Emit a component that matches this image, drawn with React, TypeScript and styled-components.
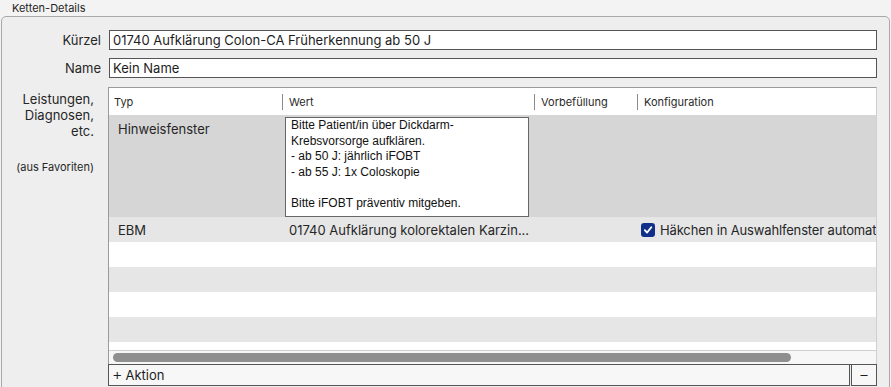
import React from 'react';
import styled, { createGlobalStyle } from 'styled-components';

const GlobalStyle = createGlobalStyle`
  html, body {
    margin: 0;
    padding: 0;
    background: #f3f3f3;
    overflow: hidden;
  }
  body {
    font-family: Inter, "Liberation Sans", sans-serif;
    color: #1d1d1d;
  }
`;

const Page = styled.div`
  width: 891px;
  height: 387px;
  overflow: hidden;
  background: #f3f3f3;
`;

const GroupTitle = styled.div`
  height: 16px;
  padding-left: 12px;
  font-size: 11px;
  line-height: 17px;
  color: #262626;
`;

const GroupBox = styled.div`
  margin-left: 1px;
  width: 889px;
  height: 400px;
  border: 1px solid #a9a9a9;
  border-radius: 5px 5px 0 0;
  background: #eeeeee;
  padding: 13px 12px 0 0;
  box-sizing: border-box;
  display: grid;
  grid-template-columns: 99px minmax(0, 1fr);
  grid-template-rows: 20px 20px auto;
  column-gap: 8px;
  row-gap: 8px;
`;

const Label = styled.div<{ $multi?: boolean }>`
  font-size: 13px;
  text-align: right;
  color: #262626;
  line-height: ${({ $multi }) => ($multi ? '16px' : '20px')};
  padding-right: ${({ $multi }) => ($multi ? '7px' : '0')};
  padding-top: ${({ $multi }) => ($multi ? '5px' : '0')};
`;

const Hint = styled.div`
  font-size: 11px;
  margin-top: 20px;
`;

const TextField = styled.div`
  height: 20px;
  box-sizing: border-box;
  border: 1px solid #555555;
  background: #ffffff;
  font-size: 13px;
  line-height: 18px;
  padding-left: 3px;
  white-space: nowrap;
  overflow: hidden;
`;

const TableWrap = styled.div`
  min-width: 0;
  margin-top: 1px;
  margin-left: -1px;
  border: 1px solid #9a9a9a;
  border-bottom: none;
  border-right-color: #cfcfcf;
  background: #ffffff;
  display: flex;
  flex-direction: column;
  height: 298px;
`;

const Viewport = styled.div`
  flex: 1;
  overflow: hidden;
`;

const Content = styled.div`
  width: 1100px;
`;

const HeaderRow = styled.div`
  display: grid;
  grid-template-columns: 173px 252px 103px 1fr;
  height: 27px;
  background: #ffffff;
  align-items: center;
`;

const HeaderCell = styled.div<{ $sep?: boolean }>`
  font-size: 11px;
  color: #2a2a2a;
  height: 16px;
  line-height: 16px;
  padding-left: ${({ $sep }) => ($sep ? '6px' : '5px')};
  border-left: ${({ $sep }) => ($sep ? '1px solid #8a8a8a' : 'none')};
`;

const Row = styled.div<{ $tone: 'sel' | 'alt' | 'plain'; $h?: number }>`
  display: grid;
  grid-template-columns: 173px 252px 103px 1fr;
  height: ${({ $h }) => $h ?? 25}px;
  background: ${({ $tone }) =>
    $tone === 'sel' ? '#d6d6d6' : $tone === 'alt' ? '#e6e6e6' : '#ffffff'};
  align-items: center;
  font-size: 13px;
  color: #262626;
`;

const Cell = styled.div<{ $pad?: number; $top?: boolean }>`
  padding-left: ${({ $pad }) => $pad ?? 9}px;
  align-self: ${({ $top }) => ($top ? 'start' : 'center')};
  padding-top: ${({ $top }) => ($top ? '6px' : '0')};
  white-space: nowrap;
  overflow: hidden;
`;

const NoteBox = styled.div`
  margin: 2px 0 0 3px;
  width: 244px;
  height: 100px;
  box-sizing: border-box;
  border: 1px solid #666666;
  background: #ffffff;
  padding: 0 5px;
  font-family: "Liberation Sans", Arial, sans-serif;
  font-size: 12px;
  line-height: 15.5px;
  color: #111111;
  white-space: pre-line;
  align-self: start;
`;

const CheckRow = styled.div`
  display: flex;
  align-items: center;
  gap: 5px;
  padding-left: 4px;
  white-space: nowrap;
  letter-spacing: -0.15px;
`;

const CheckBox = styled.span`
  width: 14px;
  height: 14px;
  border-radius: 3px;
  background: #0f2f8a;
  display: inline-flex;
  align-items: center;
  justify-content: center;
`;

const ScrollTrack = styled.div`
  height: 13px;
  border-top: 1px solid #d0d0d0;
  background: #f7f7f7;
  display: flex;
  align-items: center;
  padding-left: 4px;
`;

const ScrollThumb = styled.div`
  width: 678px;
  height: 9px;
  border-radius: 5px;
  background: #8f8f8f;
`;

const BottomBar = styled.div`
  display: flex;
  gap: 1px;
  height: 21px;
  border-top: 1px solid #555555;
  margin: 0 -1px 0 -1px;
  background: #eeeeee;
`;

const BarButton = styled.div<{ $grow?: boolean }>`
  flex: ${({ $grow }) => ($grow ? 1 : '0 0 26px')};
  box-sizing: border-box;
  border: 1px solid #555555;
  border-top: none;
  background: #f7f7f7;
  font-size: 13px;
  line-height: 19px;
  padding-left: ${({ $grow }) => ($grow ? '3px' : '0')};
  text-align: ${({ $grow }) => ($grow ? 'left' : 'center')};
  color: #1d1d1d;
`;

const Glyph = styled.span`
  font-size: 16px;
  font-weight: 300;
  margin-right: 3px;
`;

const App = (): JSX.Element => {
  const note =
    'Bitte Patient/in über Dickdarm-\nKrebsvorsorge aufklären.\n- ab 50 J: jährlich iFOBT\n- ab 55 J: 1x Coloskopie\n\nBitte iFOBT präventiv mitgeben.';
  const fillers: Array<'plain' | 'alt'> = ['plain', 'alt', 'plain', 'alt', 'plain'];

  return (
    <Page>
      <GlobalStyle />
      <GroupTitle>Ketten-Details</GroupTitle>
      <GroupBox>
        <Label>Kürzel</Label>
        <TextField>01740 Aufklärung Colon-CA Früherkennung ab 50 J</TextField>
        <Label>Name</Label>
        <TextField>Kein Name</TextField>
        <Label $multi>
          Leistungen,
          <br />
          Diagnosen,
          <br />
          etc.
          <Hint>(aus Favoriten)</Hint>
        </Label>
        <TableWrap>
          <Viewport>
            <Content>
              <HeaderRow>
                <HeaderCell>Typ</HeaderCell>
                <HeaderCell $sep>Wert</HeaderCell>
                <HeaderCell $sep>Vorbefüllung</HeaderCell>
                <HeaderCell $sep>Konfiguration</HeaderCell>
              </HeaderRow>
              <Row $tone="sel" $h={102}>
                <Cell $top>Hinweisfenster</Cell>
                <NoteBox>{note}</NoteBox>
                <Cell />
                <Cell />
              </Row>
              <Row $tone="alt">
                <Cell>EBM</Cell>
                <Cell $pad={7}>01740 Aufklärung kolorektalen Karzin...</Cell>
                <Cell />
                <CheckRow>
                  <CheckBox>
                    <svg width="10" height="10" viewBox="0 0 10 10">
                      <path d="M1.8 5.2 L4 7.6 L8.3 2.2" fill="none" stroke="#ffffff" strokeWidth="1.8" strokeLinecap="round" strokeLinejoin="round" />
                    </svg>
                  </CheckBox>
                  Häkchen in Auswahlfenster automat
                </CheckRow>
              </Row>
              {fillers.map((tone, i) => (
                <Row key={i} $tone={tone} />
              ))}
            </Content>
          </Viewport>
          <ScrollTrack>
            <ScrollThumb />
          </ScrollTrack>
          <BottomBar>
            <BarButton $grow>
              <Glyph>+</Glyph>Aktion
            </BarButton>
            <BarButton>
              <Glyph style={{ marginRight: 0 }}>−</Glyph>
            </BarButton>
          </BottomBar>
        </TableWrap>
      </GroupBox>
    </Page>
  );
};

export default App;
